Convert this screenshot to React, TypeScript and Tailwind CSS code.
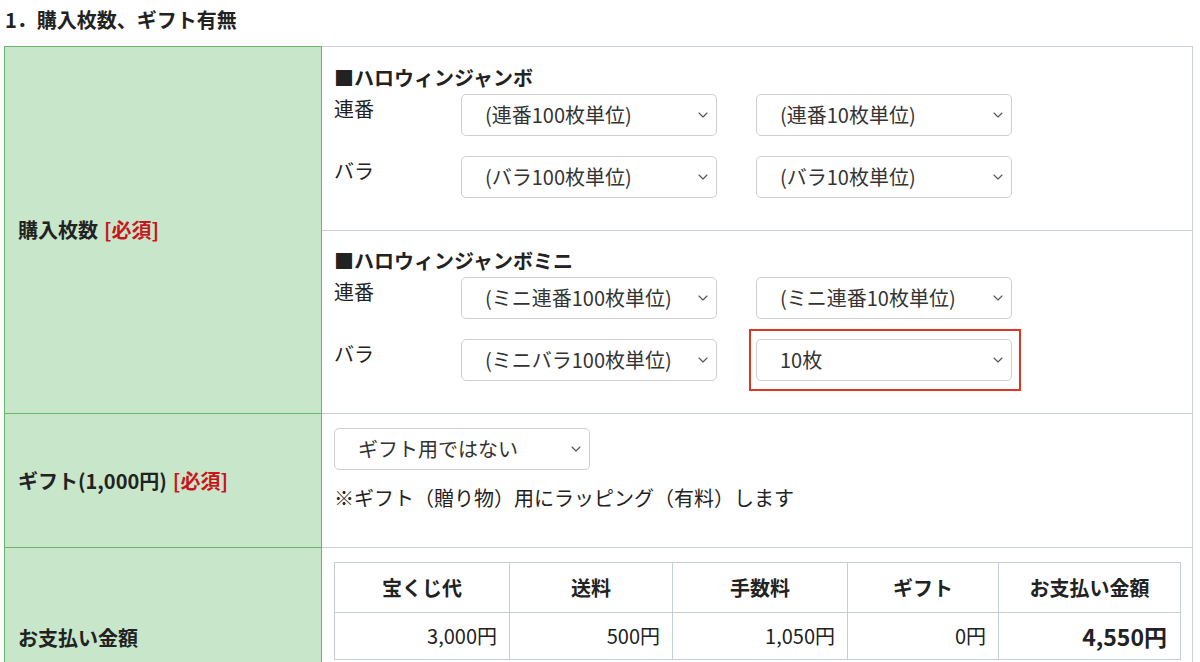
import { ReactNode } from 'react';

const font = { fontFamily: '"Noto Sans CJK JP", "Noto Sans", sans-serif' };

const Chevron = () => (
  <svg
    className="pointer-events-none absolute right-[9px] top-1/2 -translate-y-1/2"
    width="10"
    height="6"
    viewBox="0 0 10 6"
    fill="none"
  >
    <path d="M1 1l4 4 4-4" stroke="#555" strokeWidth="1.1" strokeLinecap="round" strokeLinejoin="round" />
  </svg>
);

const Select = ({ value }: { value: string }) => (
  <div className="relative w-[256px] h-[42px]">
    <select
      defaultValue={value}
      className="appearance-none w-full h-full rounded-[5px] border border-[#cfcfcf] bg-white pl-[23px] pr-[28px] text-[20px] text-[#333] outline-none"
      style={font}
    >
      <option value={value}>{value}</option>
    </select>
    <Chevron />
  </div>
);

const Required = () => <span className="text-[#c8161d] ml-[6px]">[必須]</span>;

const LotteryBlock = ({
  title,
  rows,
  highlight,
}: {
  title: string;
  rows: { label: string; a: string; b: string }[];
  highlight?: boolean;
}) => (
  <div className="flex flex-col">
    <p className="font-bold leading-[26px]">{title}</p>
    <div className="flex flex-col gap-[20px] mt-[3px]">
      {rows.map((r, i) => (
        <div key={r.label} className="flex items-start">
          <span className="w-[127px] leading-[26px] mt-[2px]">{r.label}</span>
          <Select value={r.a} />
          <div className="relative ml-[39px]">
            {highlight && i === 1 && (
              <div className="pointer-events-none absolute left-[-7px] right-[-9px] top-[-10px] bottom-[-10px] border-2 border-[#d63b22]" />
            )}
            <Select value={r.b} />
          </div>
        </div>
      ))}
    </div>
  </div>
);

const LabelCell = ({ children, rowSpan }: { children: ReactNode; rowSpan?: number }) => (
  <th
    rowSpan={rowSpan}
    className="w-[317px] bg-[#c8e6ca] border border-[#6cb66c] text-left align-middle pl-[13px] font-bold text-[20px] text-[#222]"
  >
    {children}
  </th>
);

const cols = [
  { head: '宝くじ代', val: '3,000円', w: 'w-[175px]' },
  { head: '送料', val: '500円', w: 'w-[163px]' },
  { head: '手数料', val: '1,050円', w: 'w-[175px]' },
  { head: 'ギフト', val: '0円', w: 'w-[151px]' },
  { head: 'お支払い金額', val: '4,550円', w: 'w-[182px]' },
];

export default function App() {
  return (
    <div className="bg-white min-h-screen text-[#222] text-[20px] overflow-hidden" style={font}>
      <h2 className="font-bold text-[20px] leading-[26px] pl-[5px] pt-[7px]">1．購入枚数、ギフト有無</h2>
      <table className="ml-[4px] mt-[13px] w-[1189px] border-collapse">
        <tbody>
          <tr>
            <LabelCell rowSpan={2}>
              購入枚数
              <Required />
            </LabelCell>
            <td className="border border-[#c9d0d7] border-l-[#6cb66c] h-[184px] align-top pl-[12px] pt-[18px]">
              <LotteryBlock
                title="■ハロウィンジャンボ"
                rows={[
                  { label: '連番', a: '(連番100枚単位)', b: '(連番10枚単位)' },
                  { label: 'バラ', a: '(バラ100枚単位)', b: '(バラ10枚単位)' },
                ]}
              />
            </td>
          </tr>
          <tr>
            <td className="border border-[#c9d0d7] border-l-[#6cb66c] h-[183px] align-top pl-[12px] pt-[17px]">
              <LotteryBlock
                title="■ハロウィンジャンボミニ"
                highlight
                rows={[
                  { label: '連番', a: '(ミニ連番100枚単位)', b: '(ミニ連番10枚単位)' },
                  { label: 'バラ', a: '(ミニバラ100枚単位)', b: '10枚' },
                ]}
              />
            </td>
          </tr>
          <tr>
            <LabelCell>
              ギフト(1,000円)
              <Required />
            </LabelCell>
            <td className="border border-[#c9d0d7] border-l-[#6cb66c] h-[134px] align-top pl-[12px] pt-[14px]">
              <Select value="ギフト用ではない" />
              <p className="leading-[26px] mt-[15px]">※ギフト（贈り物）用にラッピング（有料）します</p>
            </td>
          </tr>
          <tr>
            <LabelCell>お支払い金額</LabelCell>
            <td className="border border-[#c9d0d7] border-l-[#6cb66c] h-[180px] align-top pl-[12px] pt-[14px]">
              <table className="border-collapse">
                <thead>
                  <tr>
                    {cols.map((c) => (
                      <th
                        key={c.head}
                        className={`${c.w} h-[50px] border border-[#c5cdd6] text-center font-bold text-[20px]`}
                      >
                        {c.head}
                      </th>
                    ))}
                  </tr>
                </thead>
                <tbody>
                  <tr>
                    {cols.map((c, i) => (
                      <td
                        key={c.head}
                        className={
                          i === cols.length - 1
                            ? 'h-[47px] border border-[#c5cdd6] text-right pr-[13px] font-bold text-[23px]'
                            : 'h-[47px] border border-[#c5cdd6] text-right pr-[12px] text-[20px]'
                        }
                      >
                        {c.val}
                      </td>
                    ))}
                  </tr>
                </tbody>
              </table>
            </td>
          </tr>
        </tbody>
      </table>
    </div>
  );
}
